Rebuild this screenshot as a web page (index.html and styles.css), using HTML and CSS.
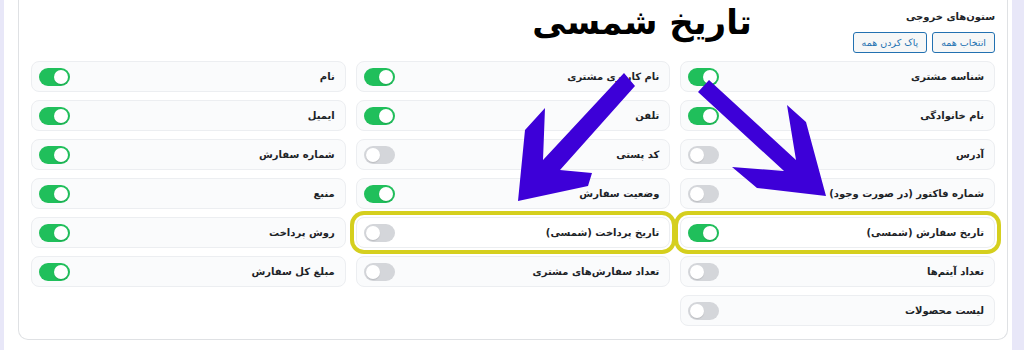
FILE: index.html
```html
<!DOCTYPE html>
<html lang="fa">
<head>
<meta charset="utf-8">
<title>ستون‌های خروجی</title>
<link rel="stylesheet" href="styles.css">
</head>
<body>
<div class="page">
  <div class="sheet">
    <div class="card">
      <div class="head">
        <div class="head-title">ستون‌های خروجی</div>
        <div class="btns">
          <button class="btn">انتخاب همه</button>
          <button class="btn">پاک کردن همه</button>
        </div>
      </div>
      <div class="grid">
        <div class="row"><span class="label">شناسه مشتری</span><span class="toggle on"></span></div>
        <div class="row"><span class="label">نام کاربری مشتری</span><span class="toggle on"></span></div>
        <div class="row"><span class="label">نام</span><span class="toggle on"></span></div>

        <div class="row"><span class="label">نام خانوادگی</span><span class="toggle on"></span></div>
        <div class="row"><span class="label">تلفن</span><span class="toggle on"></span></div>
        <div class="row"><span class="label">ایمیل</span><span class="toggle on"></span></div>

        <div class="row"><span class="label">آدرس</span><span class="toggle"></span></div>
        <div class="row"><span class="label">کد پستی</span><span class="toggle"></span></div>
        <div class="row"><span class="label">شماره سفارش</span><span class="toggle on"></span></div>

        <div class="row"><span class="label">شماره فاکتور (در صورت وجود)</span><span class="toggle"></span></div>
        <div class="row"><span class="label">وضعیت سفارش</span><span class="toggle on"></span></div>
        <div class="row"><span class="label">منبع</span><span class="toggle on"></span></div>

        <div class="row hl"><span class="label">تاریخ سفارش (شمسی)</span><span class="toggle on"></span></div>
        <div class="row hl"><span class="label">تاریخ پرداخت (شمسی)</span><span class="toggle"></span></div>
        <div class="row"><span class="label">روش پرداخت</span><span class="toggle on"></span></div>

        <div class="row"><span class="label">تعداد آیتم‌ها</span><span class="toggle"></span></div>
        <div class="row"><span class="label">تعداد سفارش‌های مشتری</span><span class="toggle"></span></div>
        <div class="row"><span class="label">مبلغ کل سفارش</span><span class="toggle on"></span></div>

        <div class="row"><span class="label">لیست محصولات</span><span class="toggle"></span></div>
      </div>
    </div>
  </div>
  <div class="annot">تاریخ شمسی</div>
  <svg class="arrows" width="1024" height="350" viewBox="0 0 1024 350" xmlns="http://www.w3.org/2000/svg">
    <polygon fill="#3d00d8" points="624,73 543,160 545,108 525,130 518,201 588,186 592,173 560,170 635,86"/>
    <polygon fill="#3d00d8" points="698,92 709,80 796,160 787,105 806,122 826,196 757,188 732,167 784,171"/>
  </svg>
</div>
</body>
</html>
```

FILE: styles.css
```css
* { box-sizing: border-box; }

html, body {
  margin: 0;
  padding: 0;
}

body {
  width: 1024px;
  height: 350px;
  overflow: hidden;
  font-family: "DejaVu Sans", "Noto Sans", sans-serif;
}

.page {
  position: relative;
  display: flex;
  width: 1024px;
  height: 350px;
  padding-left: 4px;
  background: #e8e7f8;
}

.sheet {
  width: 1008px;
  height: 350px;
  background: #ffffff;
  padding: 0 4px 0 14px;
}

.card {
  width: 990px;
  height: 340px;
  border: 1px solid #dfe1e4;
  border-top: none;
  border-radius: 0 0 10px 10px;
  padding: 10px 12px 0 12px;
  direction: rtl;
}

.head-title {
  font-size: 10px;
  font-weight: bold;
  line-height: 14px;
  color: #1d2327;
}

.btns {
  display: flex;
  gap: 5px;
  margin-top: 8px;
}

.btn {
  height: 21px;
  padding: 0 8px;
  border: 1px solid #2271b1;
  border-radius: 3px;
  background: #f6f7f7;
  color: #2271b1;
  font-family: "DejaVu Sans", sans-serif;
  font-size: 9.5px;
  line-height: 19px;
}

.grid {
  display: grid;
  grid-template-columns: repeat(3, 1fr);
  column-gap: 10px;
  row-gap: 8px;
  margin-top: 8px;
}

.row {
  display: flex;
  align-items: center;
  justify-content: space-between;
  height: 31px;
  padding: 0 10px 0 7px;
  background: #fafbfc;
  border: 1px solid #eceef1;
  border-radius: 8px;
}

.row.hl {
  background: #ffffff;
  box-shadow: 0 0 0 2px #ffffff, 0 0 0 6px #d5cf1e;
}

.label {
  font-size: 10px;
  font-weight: bold;
  color: #1d2327;
  white-space: nowrap;
}

.toggle {
  position: relative;
  width: 31px;
  height: 18px;
  border-radius: 9px;
  background: #d4d6da;
  flex: none;
}

.toggle::after {
  content: "";
  position: absolute;
  top: 2px;
  left: 2px;
  width: 14px;
  height: 14px;
  border-radius: 50%;
  background: #ffffff;
  box-shadow: 0 1px 1px rgba(0,0,0,0.12);
}

.toggle.on {
  background: #20bf5b;
}

.toggle.on::after {
  left: 15px;
}

.annot {
  position: absolute;
  top: 0;
  left: 512px;
  width: 260px;
  text-align: center;
  direction: rtl;
  white-space: nowrap;
  font-family: "DejaVu Sans", sans-serif;
  font-weight: bold;
  font-size: 34px;
  line-height: 44px;
  color: #000000;
}

.arrows {
  position: absolute;
  top: 0;
  left: 0;
  pointer-events: none;
}
```
